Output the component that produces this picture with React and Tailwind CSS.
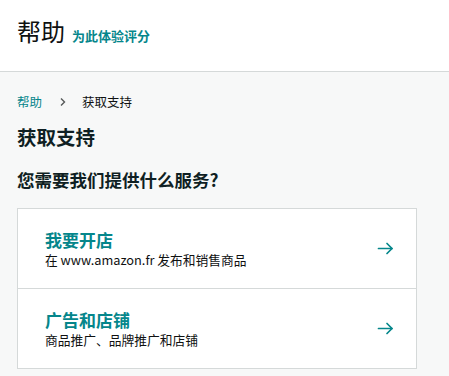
import React from 'react';

const options = [
  { title: '我要开店', desc: '在 www.amazon.fr 发布和销售商品' },
  { title: '广告和店铺', desc: '商品推广、品牌推广和店铺' },
];

const Arrow = () => (
  <svg width="17" height="13" viewBox="0 0 17 13" fill="none" stroke="#05868b" strokeWidth="1.7" strokeLinecap="round" strokeLinejoin="round">
    <path d="M1.5 6.5H15" />
    <path d="M10 1.5L15 6.5L10 11.5" />
  </svg>
);

const App = () => {
  return (
    <div className="min-h-[376px] bg-[#f7f8f8] text-[#0f1111] font-['Noto_Sans_CJK_SC',sans-serif]">
      <header className="h-[72px] bg-white border-b border-[#d5d9d9] px-[17px] pt-[16px]">
        <div className="flex items-baseline gap-[7px]">
          <h1 className="text-[24px] leading-[30px] text-[#0f1111]">帮助</h1>
          <a className="text-[13px] leading-[18px] font-bold text-[#05868b]">为此体验评分</a>
        </div>
      </header>

      <main className="px-[17px] pt-[20px]">
        <nav className="flex items-center text-[12.5px] leading-[20px]">
          <a className="text-[#05868b]">帮助</a>
          <span className="ml-[17px] mr-[15px]">
            <svg width="8" height="10" viewBox="0 0 8 10" fill="none" stroke="#565959" strokeWidth="1.4">
              <path d="M2 1.5L5.5 5L2 8.5" />
            </svg>
          </span>
          <span className="text-[#0f1111]">获取支持</span>
        </nav>

        <h2 className="mt-[11px] text-[19.5px] leading-[28px] font-bold text-[#0f1f23]">获取支持</h2>

        <h3 className="mt-[16px] text-[17.5px] leading-[26px] font-bold text-[#0f1f23]">您需要我们提供什么服务?</h3>

        <div className="mt-[15px] w-[400px] bg-white border border-[#d5d9d9]">
          {options.map((item, i) => (
            <div
              key={item.title}
              className={`flex items-center justify-between pl-[27px] pr-[22px] ${i > 0 ? 'border-t border-[#d5d9d9] h-[80px]' : 'h-[79px]'}`}
            >
              <div>
                <p className="text-[17px] leading-[22px] font-semibold text-[#05868b]">{item.title}</p>
                <p className="text-[12.75px] leading-[18px] text-[#0f1111]">{item.desc}</p>
              </div>
              <Arrow />
            </div>
          ))}
        </div>
      </main>
    </div>
  );
};

export default App;
